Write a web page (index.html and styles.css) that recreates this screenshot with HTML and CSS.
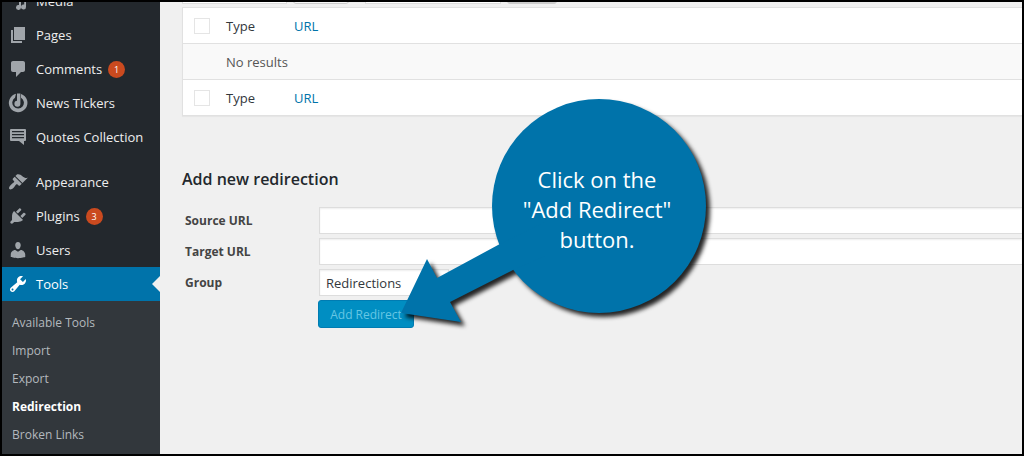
FILE: index.html
```html
<!DOCTYPE html>
<html lang="en">
<head>
  <meta charset="UTF-8">
  <title>Redirection</title>
  <meta name="viewport" content="width=device-width, initial-scale=1.0">
  <link rel="stylesheet" href="styles.css">
</head>
<body>

<div class="screen">
  <nav class="sidebar">
    <ul class="menu">
      <li><a href="#media">
        <svg class="icon" viewBox="0 0 20 20"><path d="M1 3h9v8H1zM11 9l7-1.500v8.500a2.500 2.500 0 1 1-1.800-2.400V10.500L13 11v5.500a2.500 2.500 0 1 1-2-2.400z"/></svg>
        Media</a></li>
      <li><a href="#pages">
        <svg class="icon" viewBox="0 0 20 20"><path d="M6 2h11v13H6zM3 5h2v11h9v2H3z"/></svg>
        Pages</a></li>
      <li><a href="#comments">
        <svg class="icon" viewBox="0 0 20 20"><path d="M5 2h10c1.100 0 2 .9 2 2v7c0 1.100-.9 2-2 2h-2l-5 5v-5H5c-1.100 0-2-.9-2-2V4c0-1.100.9-2 2-2z"/></svg>
        Comments <span class="badge">1</span></a></li>
      <li><a href="#tickers">
        <svg class="icon" viewBox="0 0 20 20"><path d="M8 .8A9.300 9.300 0 1 0 13 1v3.700A5.800 5.800 0 1 1 7 4.800z"/><path d="M9 .6h3.400v10.200a3 3 0 1 1-3.400-3z"/></svg>
        News Tickers</a></li>
      <li><a href="#quotes">
        <svg class="icon" viewBox="0 0 20 20"><path fill-rule="evenodd" d="M3 2h14a1 1 0 0 1 1 1v10a1 1 0 0 1-1 1h-1v4l-5-4H3a1 1 0 0 1-1-1V3a1 1 0 0 1 1-1zM4 4v1.200h12V4zM4 7v1.200h12V7zM4 10v1.200h12V10z"/></svg>
        Quotes Collection</a></li>
      <li class="after-gap"><a href="#appearance">
        <svg class="icon" viewBox="0 0 20 20"><path d="M14.480 11.060L7.410 3.990l1.500-1.500c.5-.56 2.300-.47 3.510.32 1.210.8 1.430 1.280 2.910 2.100 1.180.64 2.450 1.260 4.450.85zm-.71.710L6.700 4.700 4.930 6.470c-.39.390-.39 1.020 0 1.410l1.060 1.060c.39.390.39 1.030 0 1.420-.6.600-1.430 1.110-2.210 1.690-.35.260-.7.530-1.010.84C1.430 14.230.4 16.080 1.400 17.070c.99 1 2.840-.03 4.180-1.360.31-.31.580-.66.850-1.020.57-.78 1.080-1.610 1.690-2.210.39-.39 1.020-.39 1.410 0l1.060 1.060c.39.390 1.020.39 1.410 0z"/></svg>
        Appearance</a></li>
      <li><a href="#plugins">
        <svg class="icon" viewBox="0 0 20 20"><path d="M13.110 4.360L9.870 7.600 8 5.730l3.240-3.240c.35-.34 1.050-.2 1.560.32.520.51.660 1.210.31 1.550zm-8 1.770l.91-1.120 9.010 9.010-1.190.84c-.71.710-2.630 1.160-3.820 1.160H6.140L4.900 17.260c-.59.590-1.540.59-2.120 0-.59-.58-.59-1.530 0-2.120l1.240-1.240v-3.880c0-1.130.4-3.190 1.090-3.890zm7.260 3.970l3.240-3.240c.34-.35 1.040-.21 1.550.31.520.51.660 1.210.31 1.550l-3.240 3.250z"/></svg>
        Plugins <span class="badge">3</span></a></li>
      <li><a href="#users">
        <svg class="icon" viewBox="0 0 20 20"><path d="M10 9.250c-2.270 0-2.730-3.440-2.730-3.440C7 4.020 7.820 2 9.970 2c2.160 0 2.980 2.020 2.710 3.810 0 0-.41 3.440-2.680 3.440zm0 2.570L12.720 10c2.390 0 4.520 2.330 4.520 4.530v2.490s-3.650 1.130-7.240 1.130c-3.650 0-7.240-1.130-7.240-1.130v-2.490c0-2.250 1.940-4.480 4.470-4.480z"/></svg>
        Users</a></li>
      <li class="current"><a href="#tools">
        <svg class="icon" viewBox="0 0 20 20"><path d="M16.680 9.770c-1.340 1.340-3.300 1.670-4.950.99l-5.410 6.520c-.99.990-2.590.99-3.580 0s-.99-2.590 0-3.570l6.520-5.420c-.68-1.650-.35-3.610.99-4.950 1.280-1.280 3.120-1.620 4.720-1.060l-2.890 2.890 2.820 2.820 2.860-2.870c.53 1.580.18 3.390-1.080 4.650zM3.810 16.210c.4.390 1.040.39 1.430 0 .4-.4.400-1.040 0-1.430-.39-.4-1.030-.4-1.430 0-.39.390-.39 1.030 0 1.430z"/></svg>
        Tools</a></li>
    </ul>
    <ul class="submenu">
      <li><a href="#available">Available Tools</a></li>
      <li><a href="#import">Import</a></li>
      <li><a href="#export">Export</a></li>
      <li><a href="#redirection" class="active">Redirection</a></li>
      <li><a href="#broken">Broken Links</a></li>
    </ul>
  </nav>

  <main class="content">
    <div class="toolbar">
      <select class="bulk" aria-label="Bulk actions"><option></option></select>
      <button type="button" class="apply" aria-label="Apply"></button>
      <select class="filter" aria-label="Filter by group"><option></option></select>
      <button type="button" class="filter-button" aria-label="Filter"></button>
    </div>

    <table class="redirects">
      <thead>
        <tr>
          <th class="check"><input type="checkbox" aria-label="Select all"></th>
          <th class="type">Type</th>
          <th><a href="#url">URL</a></th>
        </tr>
      </thead>
      <tbody>
        <tr>
          <td></td>
          <td colspan="2">No results</td>
        </tr>
      </tbody>
      <tfoot>
        <tr>
          <th class="check"><input type="checkbox" aria-label="Select all"></th>
          <th class="type">Type</th>
          <th><a href="#url">URL</a></th>
        </tr>
      </tfoot>
    </table>

    <h2>Add new redirection</h2>
    <form class="add-form">
      <label for="source">Source URL</label>
      <input type="text" id="source">
      <label for="target">Target URL</label>
      <input type="text" id="target">
      <label for="group">Group</label>
      <select id="group"><option>Redirections</option></select>
      <button type="button" class="primary">Add Redirect</button>
    </form>
  </main>

  <div class="callout">
    <svg viewBox="0 0 320 240" aria-hidden="true">
      <circle cx="204" cy="114" r="107"/>
      <path d="M6 221L32 167L42 186L103 153L150 130L150 164L118 178L55 210L66 230Z"/>
    </svg>
    <p>Click on the<br>"Add Redirect"<br>button.</p>
  </div>
</div>

</body>
</html>
```

FILE: styles.css
```css
* {
  box-sizing: border-box;
}

body {
  margin: 0;
  font-family: 'Segoe UI', 'Open Sans', sans-serif;
  font-size: 13px;
  color: #32373c;
}

.screen {
  position: relative;
  display: flex;
  min-height: 100vh;
  border: 2px solid #000;
  background-color: #f0f0f0;
  overflow: hidden;
}

ul {
  list-style: none;
  margin: 0;
  padding: 0;
}

a {
  color: #0073aa;
  text-decoration: none;
}

/* sidebar */

.sidebar {
  flex: 0 0 158px;
  display: flex;
  flex-direction: column;
  background-color: #23282d;
}

.menu {
  margin-top: -18px;
}

.menu a {
  display: flex;
  align-items: center;
  height: 34px;
  padding-left: 6px;
  color: #eee;
  white-space: nowrap;
}

.menu .icon {
  width: 20px;
  height: 20px;
  margin-right: 8px;
  fill: #a0a5aa;
}

.menu .after-gap {
  margin-top: 11px;
}

.badge {
  width: 17px;
  height: 17px;
  margin-left: 6px;
  border-radius: 50%;
  background-color: #ca4a1f;
  color: #fff;
  font-size: 9px;
  line-height: 17px;
  text-align: center;
}

.menu .current a {
  position: relative;
  background-color: #0073aa;
  color: #fff;
}

.menu .current .icon {
  fill: #fff;
}

.menu .current a::after {
  content: "";
  position: absolute;
  right: 0;
  top: 9px;
  border: 8px solid transparent;
  border-left-width: 0;
  border-right-color: #f0f0f0;
}

.submenu {
  flex: 1;
  padding: 8px 0 5px;
  background-color: #32373c;
}

.submenu a {
  display: block;
  padding-left: 10px;
  color: #b4b9be;
  font-size: 12px;
  line-height: 28px;
}

.submenu .active {
  color: #fff;
  font-weight: 700;
}

/* content */

.content {
  flex: 1;
  min-width: 0;
  padding-left: 22px;
}

.toolbar {
  display: flex;
  margin-top: -26px;
  margin-bottom: 3px;
}

.toolbar select,
.toolbar button {
  height: 28px;
  border: 1px solid #ddd;
  background-color: #fff;
}

.toolbar .bulk {
  width: 105px;
  margin-right: 6px;
}

.toolbar .apply {
  width: 56px;
  margin-right: 16px;
  border-color: #ccc;
  border-radius: 3px;
  background-color: #f7f7f7;
}

.toolbar .filter {
  width: 136px;
  margin-right: 6px;
}

.toolbar .filter-button {
  width: 50px;
  border-color: #ccc;
  border-radius: 3px;
  background-color: #ccc;
}

.redirects {
  width: 100%;
  border-collapse: separate;
  border-spacing: 0;
  border: 1px solid #e1e1e1;
  border-right: none;
  background-color: #fff;
  box-shadow: 0 1px 1px rgba(0, 0, 0, .04);
}

.redirects th,
.redirects td {
  height: 36px;
  padding: 0;
  font-weight: 400;
  text-align: left;
}

.redirects thead th,
.redirects td {
  border-bottom: 1px solid #e1e1e1;
}

.redirects tfoot th {
  height: 35px;
}

.redirects td {
  background-color: #f9f9f9;
  color: #555;
}

.redirects .check {
  width: 43px;
  padding-left: 11px;
}

.redirects .type {
  width: 68px;
}

.redirects input {
  display: block;
  appearance: none;
  width: 16px;
  height: 16px;
  margin: 0;
  border: 1px solid #e5e5e5;
  background-color: #fff;
}

h2 {
  margin: 51px 0 16px;
  color: #23282d;
  font-size: 16px;
  font-weight: 600;
  line-height: 24px;
}

.add-form {
  display: grid;
  grid-template-columns: 134px 1fr;
  row-gap: 4px;
  align-items: center;
  padding-left: 3px;
}

.add-form label {
  color: #444;
  font-size: 12px;
  font-weight: 700;
}

.add-form input,
.add-form select {
  height: 27px;
  padding: 0 6px;
  border: 1px solid #ddd;
  border-radius: 0;
  background-color: #fff;
  box-shadow: inset 0 1px 2px rgba(0, 0, 0, .07);
  color: #32373c;
  font: inherit;
}

.add-form input {
  border-right: none;
}

.add-form select {
  appearance: none;
  justify-self: start;
  width: 130px;
}

.primary {
  grid-column: 2;
  justify-self: start;
  width: 96px;
  height: 28px;
  margin-left: -1px;
  padding: 0;
  border: 1px solid #007cb2;
  border-radius: 3px;
  background-color: #008ec2;
  color: #66c6e4;
  font: inherit;
  font-size: 12px;
}

/* callout bubble over the form */

.callout {
  position: absolute;
  left: 393px;
  top: 90px;
  width: 320px;
  height: 240px;
  pointer-events: none;
}

.callout svg {
  width: 100%;
  height: 100%;
  fill: #0073aa;
  filter: drop-shadow(4px 4px 2px rgba(0, 0, 0, .85));
}

.callout p {
  position: absolute;
  left: 92px;
  top: 72px;
  width: 220px;
  margin: 0;
  color: #fff;
  font-size: 22px;
  line-height: 30px;
  text-align: center;
}
```
